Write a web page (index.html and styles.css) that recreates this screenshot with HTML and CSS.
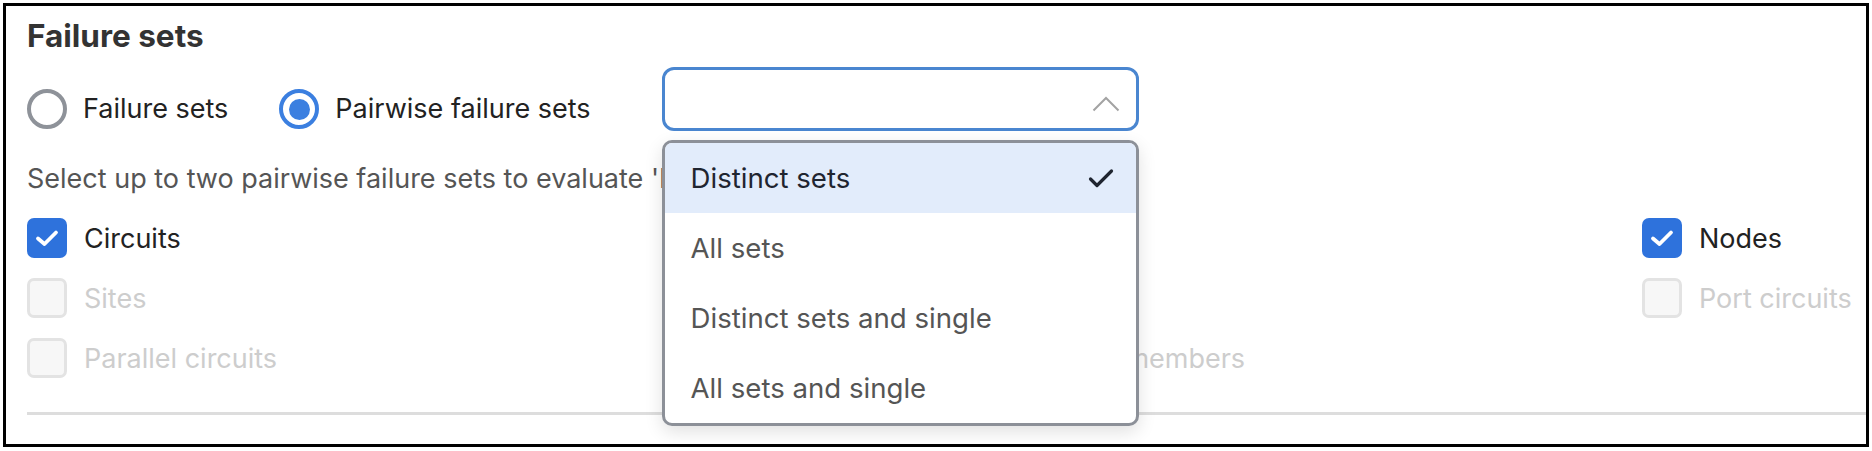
FILE: index.html
```html
<!DOCTYPE html>
<html lang="en">
<head>
<meta charset="utf-8">
<title>Failure sets</title>
<link rel="stylesheet" href="styles.css">
</head>
<body>
<div class="frame">
  <h2 class="title">Failure sets</h2>
  <div class="mode-row">
    <label class="radio">
      <span class="radio-circle"></span>
      <span class="radio-text">Failure sets</span>
    </label>
    <label class="radio radio-checked">
      <span class="radio-circle"></span>
      <span class="radio-text">Pairwise failure sets</span>
    </label>
    <div class="select">
      <div class="select-box">
        <svg class="chevron" width="28" height="16" viewBox="0 0 28 16" aria-hidden="true">
          <polyline points="1.5,14.5 14,2 26.5,14.5" fill="none" stroke="#a3a3a3" stroke-width="2"/>
        </svg>
      </div>
      <ul class="menu">
        <li class="menu-item menu-item-active">
          <span>Distinct sets</span>
          <svg class="check" width="26" height="21" viewBox="0 0 26 21" aria-hidden="true">
            <polyline points="2.5,11 9,17.5 23.5,3" fill="none" stroke="#1f2530" stroke-width="3.2" stroke-linecap="round" stroke-linejoin="round"/>
          </svg>
        </li>
        <li class="menu-item">All sets</li>
        <li class="menu-item">Distinct sets and single</li>
        <li class="menu-item">All sets and single</li>
      </ul>
    </div>
  </div>
  <p class="hint">Select up to two pairwise failure sets to evaluate 'Distinct sets' failures.</p>
  <div class="options">
    <label class="option"><span class="box box-checked"><svg width="24" height="18" viewBox="0 0 24 18" aria-hidden="true"><polyline points="3,9.5 9.5,15 21,3.5" fill="none" stroke="#fff" stroke-width="3.8" stroke-linecap="round" stroke-linejoin="round"/></svg></span><span class="option-text">Circuits</span></label>
    <label class="option"><span class="box box-checked"></span><span class="option-text">Links</span></label>
    <label class="option"><span class="box box-checked"><svg width="24" height="18" viewBox="0 0 24 18" aria-hidden="true"><polyline points="3,9.5 9.5,15 21,3.5" fill="none" stroke="#fff" stroke-width="3.8" stroke-linecap="round" stroke-linejoin="round"/></svg></span><span class="option-text">Nodes</span></label>
    <label class="option option-disabled"><span class="box"></span><span class="option-text">Sites</span></label>
    <label class="option option-disabled"><span class="box"></span><span class="option-text">Ports</span></label>
    <label class="option option-disabled"><span class="box"></span><span class="option-text">Port circuits</span></label>
    <label class="option option-disabled"><span class="box"></span><span class="option-text">Parallel circuits</span></label>
    <label class="option option-disabled"><span class="box"></span><span class="option-text">Shared risk group members</span></label>
  </div>
  <div class="divider"></div>
</div>
</body>
</html>
```

FILE: styles.css
```css
* {
  box-sizing: border-box;
}

html, body {
  margin: 0;
  padding: 0;
  background: #ffffff;
}

body {
  font-family: "Inter", "Liberation Sans", sans-serif;
  color: #222;
}

.frame {
  margin: 3px;
  width: 1866px;
  height: 444px;
  border: 3px solid #000;
  padding: 10px 0 0 21px;
  overflow: hidden;
}

.title {
  margin: 0;
  font-size: 31.5px;
  line-height: 40px;
  font-weight: 700;
  color: #333;
}

.mode-row {
  margin-top: 11px;
  display: flex;
  align-items: flex-end;
}

.radio {
  display: flex;
  align-items: center;
  gap: 16px;
  margin-bottom: 2px;
  margin-right: 51px;
  font-size: 27px;
  line-height: 40px;
  color: #222;
}

.radio-circle {
  width: 40px;
  height: 40px;
  border-radius: 50%;
  border: 4px solid #8e9299;
  background: #fff;
  display: flex;
  align-items: center;
  justify-content: center;
}

.radio-checked .radio-circle {
  border-color: #3b7fe0;
}

.radio-checked .radio-circle::after {
  content: "";
  width: 21px;
  height: 21px;
  border-radius: 50%;
  background: #3b7fe0;
}

.select {
  position: relative;
  margin-left: 20px;
  width: 477px;
}

.select-box {
  height: 64px;
  border: 3px solid #4a86d0;
  border-radius: 12px;
  background: #fff;
  display: flex;
  align-items: center;
  justify-content: flex-end;
  padding: 10px 16px 0 0;
}

.menu {
  position: absolute;
  left: 0;
  right: 0;
  top: 73px;
  margin: 0;
  padding: 0;
  list-style: none;
  background: #fff;
  border: 3px solid #8c9098;
  border-radius: 10px;
  overflow: hidden;
  box-shadow: 0 6px 18px rgba(0, 0, 0, 0.12);
  z-index: 10;
}

.menu-item {
  height: 70px;
  display: flex;
  align-items: center;
  justify-content: space-between;
  padding: 0 22px 0 26px;
  font-size: 27.6px;
  color: #555;
}

.menu-item-active {
  background: #e2ecfb;
  color: #1f2530;
}

.hint {
  margin: 28px 0 0;
  font-size: 27px;
  line-height: 40px;
  color: #555;
  white-space: nowrap;
}

.options {
  margin-top: 19px;
  display: grid;
  grid-template-columns: 807px 808px auto;
  row-gap: 20px;
}

.option {
  display: flex;
  align-items: center;
  gap: 17px;
  height: 40px;
  font-size: 27px;
  color: #222;
  white-space: nowrap;
}

.box {
  flex: none;
  width: 40px;
  height: 40px;
  border-radius: 7px;
  border: 3px solid #e3e3e3;
  background: #f7f7f7;
  display: flex;
  align-items: center;
  justify-content: center;
}

.box-checked {
  border: none;
  background: #2e72dc;
}

.option-disabled .option-text {
  color: #cdcdcd;
}

.divider {
  margin-top: 34px;
  height: 3px;
  background: #dddddd;
}
```
